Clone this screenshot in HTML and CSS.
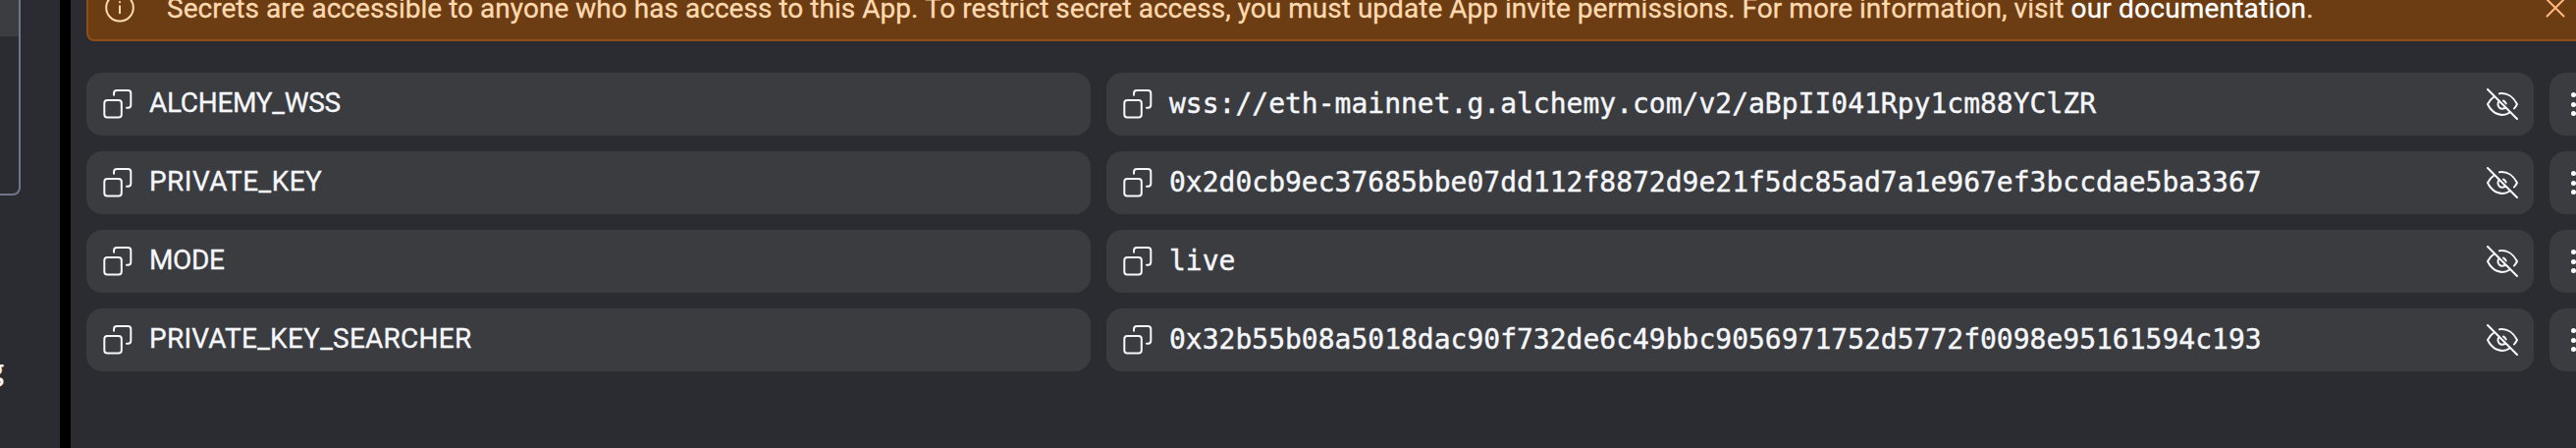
FILE: index.html
```
<!DOCTYPE html>
<html lang="en">
<head>
<meta charset="utf-8">
<title>Secrets</title>
<link rel="stylesheet" href="styles.css">
</head>
<body>
<svg class="sprite" aria-hidden="true">
  <symbol id="copy" viewBox="0 0 32 32"><path d="M12 6.700V5a3 3 0 0 1 3-3H26.300a3 3 0 0 1 3 3V16.700a3 3 0 0 1-3 3h-1.300"/><rect x="2.300" y="12" width="17.500" height="17.500" rx="3"/></symbol>
  <symbol id="eye-off" viewBox="0 0 32 32"><path d="M1 1 31 31M13 5.300C21 4 27.500 9 31 16c-1 2-1.800 3-3 4.500M7.500 8.500C4.500 10.500 2.500 13 1 16c5 10.500 15 13.500 22.500 8.500M12.700 13a4.500 4.500 0 1 0 6.600 6.300M17 12.500q2 .8 2.700 3"/></symbol>
</svg>
<div class="app">
  <aside class="side"><div class="card"><div class="card-head"></div></div><p class="clip">g</p></aside>
  <div class="divider"></div>
  <main class="main">
    <section class="banner">
      <svg class="info" viewBox="0 0 32 32"><circle cx="16" cy="15.700" r="13.800"/><path d="M16 14.300v7M16 10v.3"/></svg>
      <p class="message"><span class="warn">Secrets are accessible to anyone who has access to this App. To restrict secret access, you must update App invite permissions. For more information, visit </span><a class="link">our documentation</a><span class="warn">.</span></p>
      <svg class="close" viewBox="0 0 20 20"><path d="M1.500 1.500l17 17M18.500 1.500l-17 17"/></svg>
    </section>
    <div class="rows">
      <div class="cell"><svg class="icon"><use href="#copy"/></svg><span class="name n1">ALCHEMY_WSS</span></div>
      <div class="cell"><svg class="icon"><use href="#copy"/></svg><code class="value">wss://eth-mainnet.g.alchemy.com/v2/aBpII041Rpy1cm88YClZR</code><svg class="icon eye"><use href="#eye-off"/></svg></div>
      <div class="cell more"><i></i><i></i><i></i></div>
      <div class="cell"><svg class="icon"><use href="#copy"/></svg><span class="name n2">PRIVATE_KEY</span></div>
      <div class="cell"><svg class="icon"><use href="#copy"/></svg><code class="value">0x2d0cb9ec37685bbe07dd112f8872d9e21f5dc85ad7a1e967ef3bccdae5ba3367</code><svg class="icon eye"><use href="#eye-off"/></svg></div>
      <div class="cell more"><i></i><i></i><i></i></div>
      <div class="cell"><svg class="icon"><use href="#copy"/></svg><span class="name n3">MODE</span></div>
      <div class="cell"><svg class="icon"><use href="#copy"/></svg><code class="value">live</code><svg class="icon eye"><use href="#eye-off"/></svg></div>
      <div class="cell more"><i></i><i></i><i></i></div>
      <div class="cell"><svg class="icon"><use href="#copy"/></svg><span class="name n4">PRIVATE_KEY_SEARCHER</span></div>
      <div class="cell"><svg class="icon"><use href="#copy"/></svg><code class="value">0x32b55b08a5018dac90f732de6c49bbc9056971752d5772f0098e95161594c193</code><svg class="icon eye"><use href="#eye-off"/></svg></div>
      <div class="cell more"><i></i><i></i><i></i></div>
    </div>
  </main>
</div>
</body>
</html>
```
FILE: styles.css
```
* { box-sizing: border-box; }
body { margin: 0; background: #2b2c31; overflow: hidden; font: 28px/40px Roboto, sans-serif; color: #f5f7fb; }
p { margin: 0; }
svg { fill: none; stroke: currentColor; stroke-width: 2; stroke-linecap: round; stroke-linejoin: round; flex: none; }
.sprite { display: none; }
.app { display: flex; width: 2624px; height: 456px; overflow: hidden; }
.side { flex: 0 0 61px; overflow: hidden; }
.card { width: 21px; height: 199px; border: solid #70758c; border-width: 0 2px 2px 0; border-radius: 0 0 8px 0; }
.card-head { height: 37px; background: #3c3d41; }
.clip { display: flex; justify-content: flex-end; width: 4px; margin-top: 157px; font: 600 28px/40px "Open Sans", sans-serif; }
.divider { flex: 0 0 11px; background: #000; }
.main { flex: none; width: 2577px; padding-left: 16px; }
.banner { display: flex; align-items: flex-start; height: 42px; border: solid #8f4e18; border-width: 0 0 2px 2px; border-radius: 0 0 0 8px; background: #6c3d12; color: #ffd9b0; overflow: hidden; }
.info { width: 32px; height: 32px; margin: -8px 0 0 16px; }
.message { flex: none; width: 2412px; margin: -11px 0 0 32px; white-space: nowrap; -webkit-text-stroke: .3px currentColor; }
.warn { letter-spacing: .032px; }
.link { color: #fff; letter-spacing: .2px; }
.close { width: 20px; height: 20px; margin: -2px 0 0 11px; color: #ffb981; }
.rows { display: grid; grid-template-columns: 1023px 1454px 64px; grid-auto-rows: 64px; gap: 16px; margin-top: 32px; }
.cell { display: flex; align-items: center; padding: 0 16px; border-radius: 16px; background: #3b3c40; }
.icon { width: 32px; height: 32px; margin-right: 16px; }
.eye { margin: 0 0 0 auto; }
.name { padding-bottom: 3px; -webkit-text-stroke: .3px currentColor; }
.n1 { letter-spacing: -.3px; }
.n2 { letter-spacing: .45px; }
.n3 { letter-spacing: -.4px; }
.n4 { letter-spacing: .25px; }
.value { font: 28px/40px "DejaVu Sans Mono", monospace; padding-bottom: 1px; -webkit-text-stroke: .4px currentColor; }
.more { flex-direction: column; justify-content: center; gap: 4.3px; padding: 0 0 0 21.5px; align-items: flex-start; }
.more i { width: 5px; height: 5px; border-radius: 50%; background: #fff; }
```
